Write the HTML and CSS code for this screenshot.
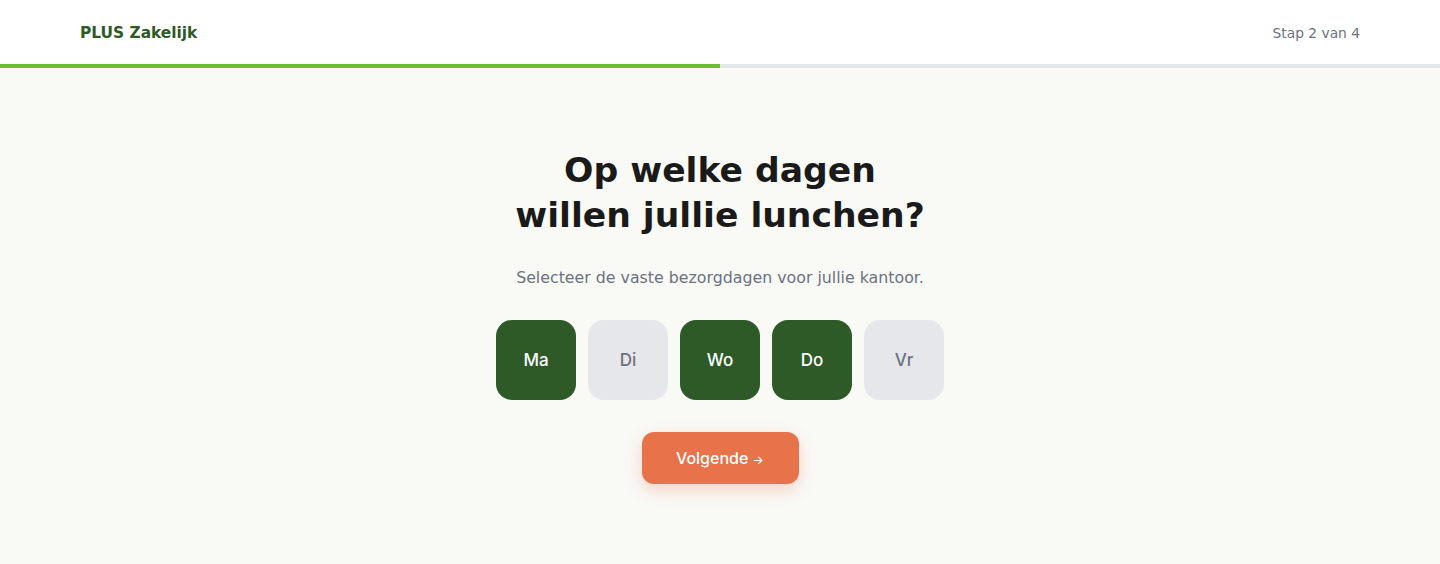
FILE: index.html
```html
<!DOCTYPE html>
<html lang="nl">
<head>
<meta charset="utf-8">
<title>PLUS Zakelijk</title>
<link rel="stylesheet" href="styles.css">
</head>
<body>
<header class="topbar">
  <div class="logo">PLUS Zakelijk</div>
  <div class="step">Stap 2 van 4</div>
</header>
<div class="progress"><div class="progress-fill" style="width:50%"></div></div>
<main class="main">
  <h1 class="title">Op welke dagen<br>willen jullie lunchen?</h1>
  <p class="subtitle">Selecteer de vaste bezorgdagen voor jullie kantoor.</p>
  <div class="days">
    <button class="day on">Ma</button>
    <button class="day">Di</button>
    <button class="day on">Wo</button>
    <button class="day on">Do</button>
    <button class="day">Vr</button>
  </div>
  <button class="next">Volgende <span class="arrow">→</span></button>
</main>
</body>
</html>
```
FILE: styles.css
```css
* { box-sizing: border-box; }
html, body { margin: 0; padding: 0; }
body {
  font-family: "DejaVu Sans", "Noto Sans", sans-serif;
  background: #f9f9f6;
  color: #1a1a1a;
  min-height: 564px;
}
.topbar {
  height: 64px;
  background: #ffffff;
  display: flex;
  align-items: center;
  justify-content: space-between;
  padding: 2px 80px 0;
}
.logo {
  font-weight: 700;
  font-size: 15.4px;
  color: #2d5a27;
}
.step {
  font-size: 13.8px;
  color: #6b7280;
}
.progress {
  height: 4px;
  background: #e5e7eb;
}
.progress-fill {
  height: 100%;
  background: #6cc02f;
}
.main {
  display: flex;
  flex-direction: column;
  align-items: center;
  padding-top: 80px;
}
.title {
  margin: 0;
  font-size: 34.6px;
  line-height: 45px;
  font-weight: 800;
  text-align: center;
  color: #1a1a1a;
}
.subtitle {
  margin: 28px 0 0;
  font-size: 15.8px;
  line-height: 24px;
  color: #6b7280;
}
.days {
  margin-top: 30px;
  display: flex;
  gap: 12px;
}
.day {
  width: 80px;
  height: 80px;
  border: none;
  border-radius: 16px;
  background: #e5e7eb;
  color: #6b7280;
  font-family: Inter, "DejaVu Sans", sans-serif;
  font-size: 17px;
  font-weight: 500;
  padding: 0;
}
.day.on {
  background: #2d5a27;
  color: #ffffff;
}
.next {
  margin-top: 32px;
  width: 157px;
  height: 52px;
  border: none;
  border-radius: 12px;
  background: #e8734a;
  color: #ffffff;
  font-family: Inter, "DejaVu Sans", sans-serif;
  font-size: 16px;
  font-weight: 500;
  box-shadow: 0 6px 16px rgba(232, 115, 74, 0.28);
  padding: 0;
}
.arrow { font-size: 12px; }
```
